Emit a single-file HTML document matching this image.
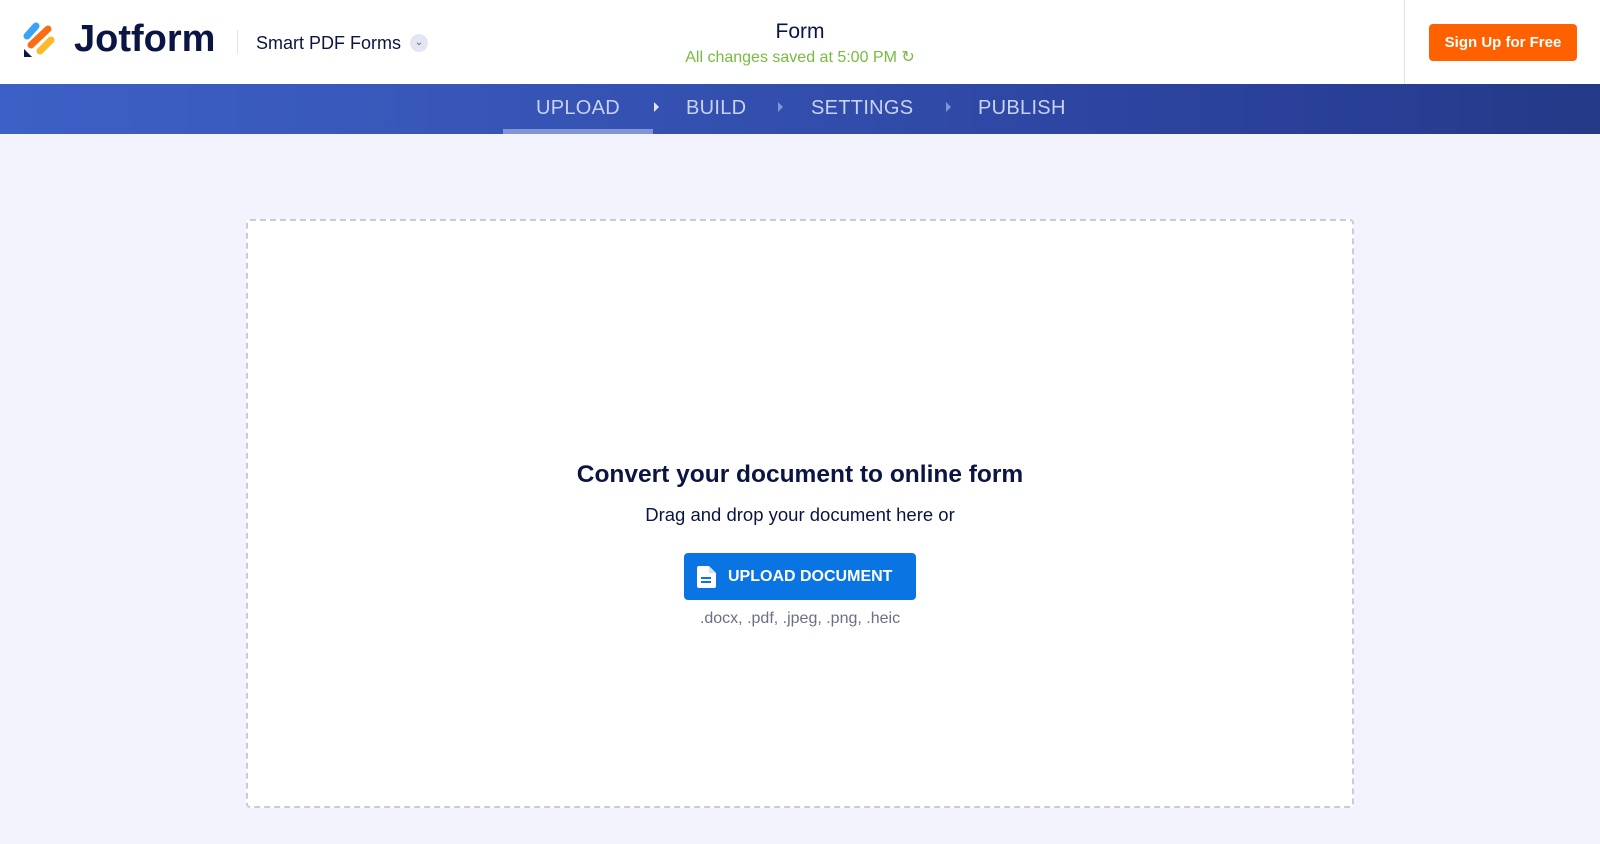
<!DOCTYPE html>
<html><head><meta charset="utf-8"><style>
*{margin:0;padding:0;box-sizing:border-box}
body{width:1600px;height:844px;background:#f3f3fe;font-family:"Liberation Sans",sans-serif;position:relative;overflow:hidden}
.hdr{position:absolute;left:0;top:0;width:1600px;height:84px;background:#fff}
.nav{position:absolute;left:0;top:84px;width:1600px;height:50px;background:linear-gradient(90deg,#3d60c6,#3552b2 40%,#2a409a 80%,#233a87)}
.abs{position:absolute;white-space:nowrap}
.navt{position:absolute;top:97px;font-size:20px;color:#c8d2f4;letter-spacing:.3px}
.arr{position:absolute;top:102px;width:0;height:0;border-top:5px solid transparent;border-bottom:5px solid transparent;border-left:5px solid #7f93d6}
.box{position:absolute;left:246px;top:219px;width:1108px;height:589px;background:#fff;border:2px dashed #c9cbd8;border-radius:4px}
</style></head><body>
<div class="hdr"></div>
<svg class="abs" style="left:22px;top:21px" width="36" height="38" viewBox="0 0 36 38">
<line x1="5" y1="15" x2="14" y2="5" stroke="#39a3f5" stroke-width="7" stroke-linecap="round"/>
<line x1="9" y1="24" x2="26" y2="8" stroke="#f96d17" stroke-width="7" stroke-linecap="round"/>
<line x1="18" y1="30" x2="29" y2="19" stroke="#ffb72c" stroke-width="7" stroke-linecap="round"/>
<path d="M2 28 L2 36 L10 36 Z" fill="#0b1543"/>
</svg>
<div class="abs" style="left:74px;top:18px;font-size:38px;font-weight:bold;color:#0b1543;letter-spacing:0">Jotform</div>
<div class="abs" style="left:237px;top:30px;width:1px;height:24px;background:#e3e3ea"></div>
<div class="abs" style="left:256px;top:33px;font-size:18px;color:#0b1543">Smart PDF Forms</div>
<div class="abs" style="left:410px;top:34px;width:18px;height:18px;border-radius:50%;background:#e4e5f3;color:#5a5f80;font-size:10px;text-align:center;line-height:18px">&#8964;</div>
<div class="abs" style="left:0;width:1600px;text-align:center;top:20px;font-size:21px;color:#0b1543">Form</div>
<div class="abs" style="left:0;width:1600px;text-align:center;top:47px;font-size:16px;color:#78bb3e">All changes saved at 5:00 PM &#8635;</div>
<div class="abs" style="left:1404px;top:0;width:1px;height:84px;background:#e0e0e8"></div>
<div class="abs" style="left:1429px;top:24px;width:148px;height:37px;background:#ff6100;border-radius:4px;color:#fff;font-size:15px;font-weight:bold;text-align:center;line-height:37px">Sign Up for Free</div>
<div class="nav"></div>
<div class="navt" style="left:536px">UPLOAD</div>
<div class="abs" style="left:503px;top:129px;width:150px;height:5px;background:#8094d8"></div>
<div class="arr" style="left:654px;border-left-color:#dfe5fb"></div>
<div class="navt" style="left:686px">BUILD</div>
<div class="arr" style="left:778px"></div>
<div class="navt" style="left:811px">SETTINGS</div>
<div class="arr" style="left:946px"></div>
<div class="navt" style="left:978px">PUBLISH</div>
<div class="box"></div>
<div class="abs" style="left:0;width:1600px;text-align:center;top:461px;font-size:24.5px;font-weight:bold;color:#0b1543">Convert your document to online form</div>
<div class="abs" style="left:0;width:1600px;text-align:center;top:504px;font-size:18.5px;color:#0b1543">Drag and drop your document here or</div>
<div class="abs" style="left:684px;top:553px;width:232px;height:47px;background:#0a74e2;border-radius:4px;color:#fff;font-size:16px;font-weight:bold;line-height:47px;padding-left:44px">UPLOAD DOCUMENT</div>
<svg class="abs" style="left:697px;top:566px" width="19" height="22" viewBox="0 0 19 22"><path d="M2 0h10l7 7v13a2 2 0 0 1-2 2H2a2 2 0 0 1-2-2V2a2 2 0 0 1 2-2z" fill="#fff"/><path d="M12 0v7h7" fill="#cfe3fa"/><rect x="4" y="11" width="10" height="2" fill="#0a74e2"/><rect x="4" y="15" width="10" height="2" fill="#0a74e2"/></svg>
<div class="abs" style="left:0;width:1600px;text-align:center;top:610px;font-size:16px;color:#6c6f85">.docx, .pdf, .jpeg, .png, .heic</div>
</body></html>
